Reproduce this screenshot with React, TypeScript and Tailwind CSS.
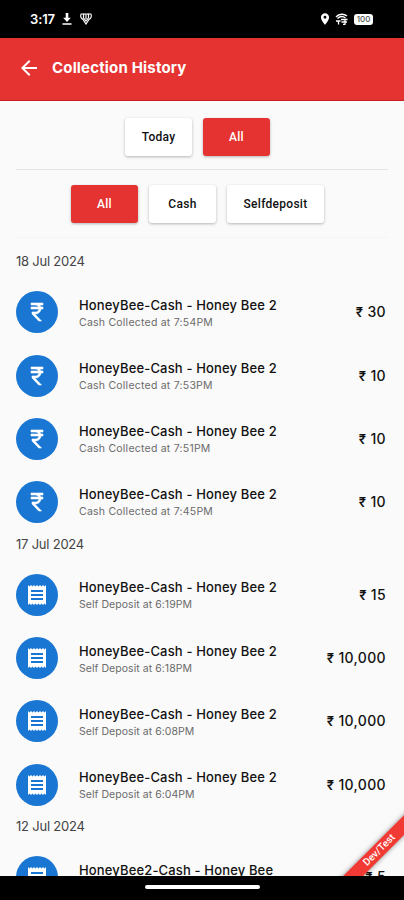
import clsx from 'clsx';
import { MdArrowBack, MdLocationOn, MdReceipt } from 'react-icons/md';

type Kind = 'cash' | 'deposit';

interface Entry {
  name: string;
  detail: string;
  amount: string;
  kind: Kind;
}

const groups: { date: string; entries: Entry[] }[] = [
  {
    date: '18 Jul 2024',
    entries: [
      { name: 'HoneyBee-Cash - Honey Bee 2', detail: 'Cash Collected at 7:54PM', amount: '30', kind: 'cash' },
      { name: 'HoneyBee-Cash - Honey Bee 2', detail: 'Cash Collected at 7:53PM', amount: '10', kind: 'cash' },
      { name: 'HoneyBee-Cash - Honey Bee 2', detail: 'Cash Collected at 7:51PM', amount: '10', kind: 'cash' },
      { name: 'HoneyBee-Cash - Honey Bee 2', detail: 'Cash Collected at 7:45PM', amount: '10', kind: 'cash' },
    ],
  },
  {
    date: '17 Jul 2024',
    entries: [
      { name: 'HoneyBee-Cash - Honey Bee 2', detail: 'Self Deposit at 6:19PM', amount: '15', kind: 'deposit' },
      { name: 'HoneyBee-Cash - Honey Bee 2', detail: 'Self Deposit at 6:18PM', amount: '10,000', kind: 'deposit' },
      { name: 'HoneyBee-Cash - Honey Bee 2', detail: 'Self Deposit at 6:08PM', amount: '10,000', kind: 'deposit' },
      { name: 'HoneyBee-Cash - Honey Bee 2', detail: 'Self Deposit at 6:04PM', amount: '10,000', kind: 'deposit' },
    ],
  },
  {
    date: '12 Jul 2024',
    entries: [
      { name: 'HoneyBee2-Cash - Honey Bee', detail: 'Self Deposit at 5:32PM', amount: '5', kind: 'deposit' },
    ],
  },
];

function RupeeIcon() {
  return (
    <svg className="size-6" viewBox="0 0 24 24" fill="currentColor" stroke="currentColor" strokeWidth="0.6">
      <path d="M13.66 7C13.1 5.82 11.9 5 10.5 5H6V3h12v2h-3.26c.48.58.84 1.260 1.050 2H18v2h-2.020c-.25 2.800-2.610 5-5.480 5h-.73l6.730 7h-2.770L7 14v-2h3.500c1.760 0 3.220-1.300 3.460-3H6V7z" />
    </svg>
  );
}

function StatusBar() {
  return (
    <div className="flex h-[38px] shrink-0 items-center bg-black pl-[30px] pr-[31px] text-white">
      <span className="font-[Inter] text-[13px] font-semibold leading-none tracking-[-0.1px]">3:17</span>
      <svg className="ml-[7px] h-3 w-[10px]" viewBox="0 0 10 12" fill="currentColor">
        <path d="M3.700 0h2.600v4.800h2.500L5 9 1.200 4.800h2.500zM.5 10.200h9v1.600h-9z" />
      </svg>
      <svg className="ml-2 h-3 w-3" viewBox="0 0 12 12" fill="none" stroke="currentColor" strokeWidth="1.200">
        <path d="M3.500 1H1.200C0 3.200 1.200 5.500 3 6.500L6 11l3-4.500c1.800-1 3-3.300 1.800-5.500H8.500" />
        <path d="M3.500 1.200h5v3.600L6 8 3.500 4.800zM6 2v4" />
      </svg>
      <div className="ml-auto flex items-center">
        <MdLocationOn className="size-[14px]" />
        <svg className="ml-[3px] h-3 w-[13px]" viewBox="0 0 13 12" fill="none" stroke="currentColor" strokeWidth="1.300">
          <path d="M1 4C4 .5 9 .5 12 3M2.500 5.500C5 3 8 3 10.500 5M1 8h4.500M3.500 8v3.500M6 6.500h6.500M6.500 9h5.500M10 6.500v5H8" />
        </svg>
        <span className="ml-[6px] flex h-[11px] w-[19px] items-center justify-center rounded-[3px] bg-white font-[Inter] text-[8px] font-medium leading-none text-neutral-600">
          100
        </span>
      </div>
    </div>
  );
}

function FilterButton({ label, active = false, wide = false }: { label: string; active?: boolean; wide?: boolean }) {
  return (
    <button
      className={clsx(
        'h-[38px] rounded-[3px] font-[Roboto] text-[12px] font-medium tracking-[0.28px] shadow-[0_1px_3px_rgba(0,0,0,0.28)]',
        wide ? 'w-[97px]' : 'w-[67px]',
        active ? 'bg-[#e53331] text-white' : 'bg-white text-[#111]',
      )}
    >
      {label}
    </button>
  );
}

function EntryRow({ entry }: { entry: Entry }) {
  const isCash = entry.kind === 'cash';

  return (
    <div className="flex h-[63.2px] items-center pl-4 pr-[18px]">
      <div className="flex size-[42px] shrink-0 items-center justify-center rounded-full bg-[#1976d2] text-white">
        {isCash ? <RupeeIcon /> : <MdReceipt className="size-6" />}
      </div>
      <div className="ml-[21px] flex-1 whitespace-nowrap pt-0.5">
        <div className="text-[13px] font-medium leading-[18px] tracking-[0.15px] text-[#111]">{entry.name}</div>
        <div
          className={clsx(
            'text-[10.500px] leading-[17px] text-[#6b6b6b]',
            isCash ? 'tracking-[0.23px]' : 'tracking-[0.05px]',
          )}
        >
          {entry.detail}
        </div>
      </div>
      <div className="flex items-center gap-[4px] whitespace-nowrap text-[14px] font-medium leading-5 tracking-[0.35px] text-[#111]">
        <span className="text-[13px] font-semibold">₹</span>
        <span>{entry.amount}</span>
      </div>
    </div>
  );
}

export default function App() {
  return (
    <div className="relative flex h-[900px] w-[404px] flex-col overflow-hidden bg-[#fafafa] font-[Inter,sans-serif]">
      <StatusBar />

      <header className="flex h-[63px] shrink-0 items-center border-b border-[#c9201f] bg-[#e53331] pb-[3px] pl-[17px] text-white">
        <MdArrowBack className="size-6" />
        <h1 className="ml-[11px] pt-px text-[15px] font-bold tracking-[0.17px]">Collection History</h1>
      </header>

      <main className="relative h-[775px] shrink-0 overflow-hidden">
        <div className="flex justify-center gap-[11px] pr-[9px] pt-[17px]">
          <FilterButton label="Today" />
          <FilterButton label="All" active />
        </div>
        <div className="mx-4 mt-[13px] h-px bg-[#e4e4e4]" />
        <div className="flex justify-center gap-[11px] pr-[9px] pt-[15px]">
          <FilterButton label="All" active />
          <FilterButton label="Cash" />
          <FilterButton label="Selfdeposit" wide />
        </div>
        <div className="mx-4 mt-[14px] h-px bg-[#f4f4f4]" />

        <div className="mt-[13px]">
          {groups.map((group) => (
            <section key={group.date}>
              <h2 className="h-[29.800px] pl-4 text-[13px] leading-5 tracking-[-0.22px] text-[#444]">{group.date}</h2>
              {group.entries.map((entry) => (
                <EntryRow key={entry.detail} entry={entry} />
              ))}
            </section>
          ))}
        </div>

        {/* Build flavour ribbon */}
        <div className="absolute bottom-[20px] right-[-35px] flex h-[13.500px] w-[120px] -rotate-45 items-center justify-center bg-[#f23a34] font-[Roboto] text-[10px] font-medium leading-none text-white shadow-[0_0_5px_rgba(0,0,0,0.45)]">
          Dev/Test
        </div>
      </main>

      <div className="flex h-6 shrink-0 justify-center bg-black pt-[9px]">
        <div className="h-1 w-[115px] rounded-full bg-white" />
      </div>
    </div>
  );
}
